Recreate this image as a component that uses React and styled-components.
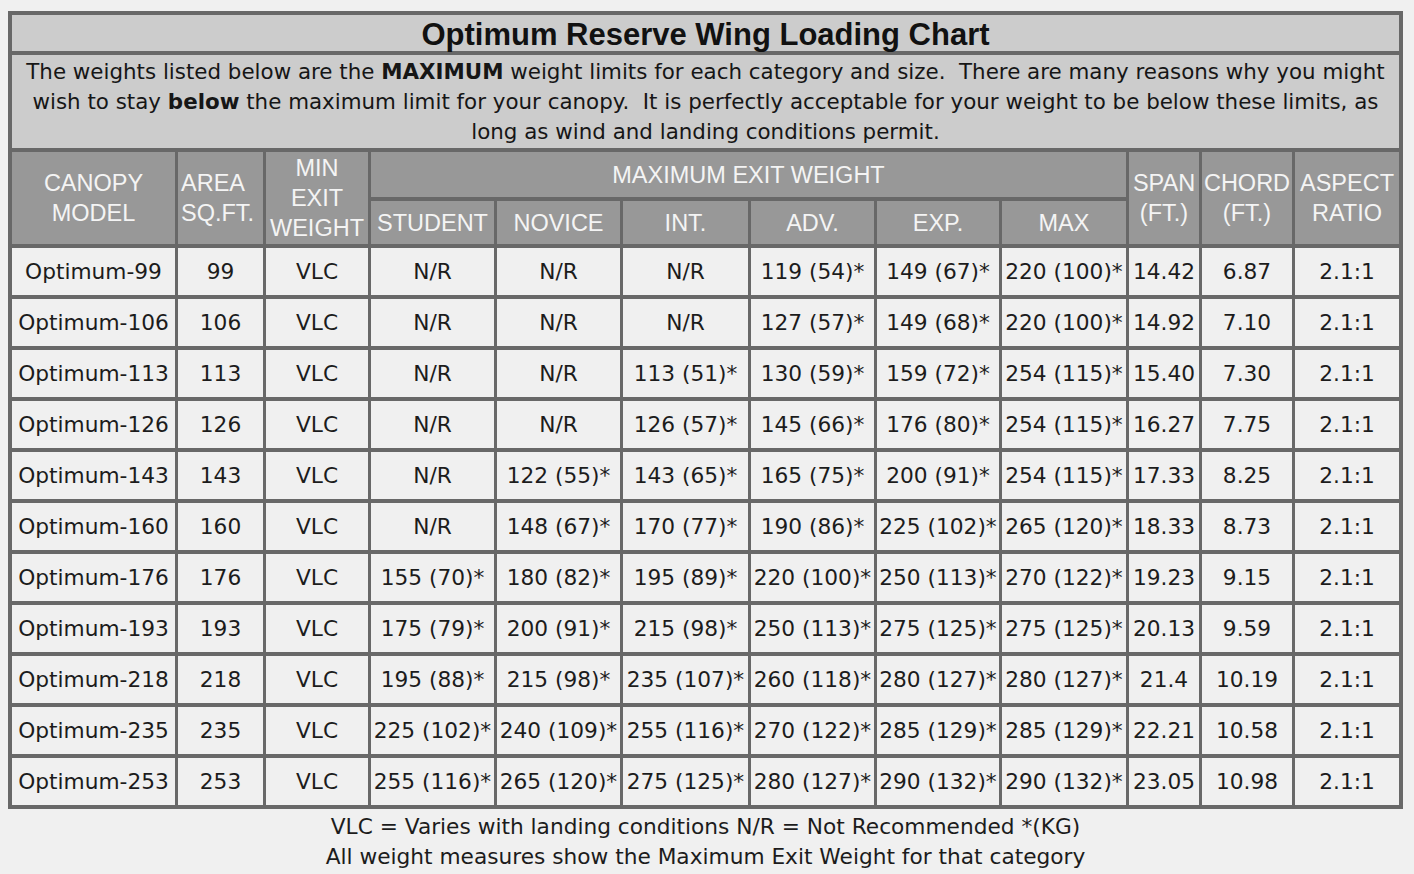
import React from "react";
import styled, { createGlobalStyle } from "styled-components";

const GlobalStyle = createGlobalStyle`
  html, body { background: #f0f0f0; }
  body { margin: 8px; font-family: "DejaVu Sans", Verdana, sans-serif; color: #1c1c1c; }
`;

const Page = styled.div`
  width: 1395px;
  padding-top: 3px;
`;

const Chart = styled.table`
  width: 1395px;
  table-layout: fixed;
  border-collapse: separate;
  border-spacing: 3px 4px;
  border-style: solid;
  border-color: #686868;
  border-width: 0 1px;
  background: #686868;
`;

const TitleCell = styled.td`
  height: 36px;
  padding: 3px 0 0;
  box-sizing: border-box;
  background: #cccccc;
  text-align: center;
  vertical-align: middle;
  font-family: "Liberation Sans", Arial, sans-serif;
  font-weight: bold;
  font-size: 31px;
  line-height: 33px;
  color: #111;
`;

const NoteCell = styled.td`
  height: 93px;
  padding: 0;
  background: #cccccc;
  text-align: center;
  vertical-align: middle;
  font-size: 21.4px;
  line-height: 30px;
  color: #161616;
`;

const NoteLine = styled.span`
  display: block;
  white-space: nowrap;
`;

const HeadCell = styled.td`
  height: ${(p) => p.$h || 43}px;
  padding: 0 0 0 ${(p) => (p.$align === "left" ? "3px" : "0")};
  background: #989898;
  color: #f4f4f4;
  text-align: ${(p) => p.$align || "center"};
  vertical-align: middle;
  font-family: "Liberation Sans", Arial, sans-serif;
  font-size: 23.5px;
  line-height: 30px;
  white-space: nowrap;
`;

const DataCell = styled.td`
  height: 47px;
  padding: 0;
  background: #f0f0f0;
  text-align: center;
  vertical-align: middle;
  font-size: 21.7px;
  white-space: nowrap;
  color: #1c1c1c;
`;

const Legend = styled.div`
  text-align: center;
  font-size: 21.7px;
  line-height: 30px;
  padding-top: 3px;
  color: #1c1c1c;
`;

const widths = [163, 85, 102, 123, 123, 125, 123, 122, 124, 70, 90, 104];

const rows = [
  ["Optimum-99", "99", "VLC", "N/R", "N/R", "N/R", "119 (54)*", "149 (67)*", "220 (100)*", "14.42", "6.87", "2.1:1"],
  ["Optimum-106", "106", "VLC", "N/R", "N/R", "N/R", "127 (57)*", "149 (68)*", "220 (100)*", "14.92", "7.10", "2.1:1"],
  ["Optimum-113", "113", "VLC", "N/R", "N/R", "113 (51)*", "130 (59)*", "159 (72)*", "254 (115)*", "15.40", "7.30", "2.1:1"],
  ["Optimum-126", "126", "VLC", "N/R", "N/R", "126 (57)*", "145 (66)*", "176 (80)*", "254 (115)*", "16.27", "7.75", "2.1:1"],
  ["Optimum-143", "143", "VLC", "N/R", "122 (55)*", "143 (65)*", "165 (75)*", "200 (91)*", "254 (115)*", "17.33", "8.25", "2.1:1"],
  ["Optimum-160", "160", "VLC", "N/R", "148 (67)*", "170 (77)*", "190 (86)*", "225 (102)*", "265 (120)*", "18.33", "8.73", "2.1:1"],
  ["Optimum-176", "176", "VLC", "155 (70)*", "180 (82)*", "195 (89)*", "220 (100)*", "250 (113)*", "270 (122)*", "19.23", "9.15", "2.1:1"],
  ["Optimum-193", "193", "VLC", "175 (79)*", "200 (91)*", "215 (98)*", "250 (113)*", "275 (125)*", "275 (125)*", "20.13", "9.59", "2.1:1"],
  ["Optimum-218", "218", "VLC", "195 (88)*", "215 (98)*", "235 (107)*", "260 (118)*", "280 (127)*", "280 (127)*", "21.4", "10.19", "2.1:1"],
  ["Optimum-235", "235", "VLC", "225 (102)*", "240 (109)*", "255 (116)*", "270 (122)*", "285 (129)*", "285 (129)*", "22.21", "10.58", "2.1:1"],
  ["Optimum-253", "253", "VLC", "255 (116)*", "265 (120)*", "275 (125)*", "280 (127)*", "290 (132)*", "290 (132)*", "23.05", "10.98", "2.1:1"],
];

const subHeads = ["STUDENT", "NOVICE", "INT.", "ADV.", "EXP.", "MAX"];

export default function App() {
  return (
    <Page>
      <GlobalStyle />
      <Chart>
        <colgroup>
          {widths.map((w, i) => (
            <col key={i} style={{ width: w }} />
          ))}
        </colgroup>
        <tbody>
          <tr>
            <TitleCell colSpan={12}>Optimum Reserve Wing Loading Chart</TitleCell>
          </tr>
          <tr>
            <NoteCell colSpan={12}>
              <NoteLine>
                The weights listed below are the <b>MAXIMUM</b> weight limits for each category and size.{"\u00a0 "}There are many reasons why you might
              </NoteLine>
              <NoteLine>
                wish to stay <b>below</b> the maximum limit for your canopy.{"\u00a0 "}It is perfectly acceptable for your weight to be below these limits, as
              </NoteLine>
              <NoteLine>long as wind and landing conditions permit.</NoteLine>
            </NoteCell>
          </tr>
          <tr>
            <HeadCell rowSpan={2}>
              CANOPY
              <br />
              MODEL
            </HeadCell>
            <HeadCell rowSpan={2} $align="left">
              AREA
              <br />
              SQ.FT.
            </HeadCell>
            <HeadCell rowSpan={2}>
              MIN
              <br />
              EXIT
              <br />
              WEIGHT
            </HeadCell>
            <HeadCell colSpan={6} $h={45}>
              MAXIMUM EXIT WEIGHT
            </HeadCell>
            <HeadCell rowSpan={2}>
              SPAN
              <br />
              (FT.)
            </HeadCell>
            <HeadCell rowSpan={2}>
              CHORD
              <br />
              (FT.)
            </HeadCell>
            <HeadCell rowSpan={2}>
              ASPECT
              <br />
              RATIO
            </HeadCell>
          </tr>
          <tr>
            {subHeads.map((h) => (
              <HeadCell key={h}>{h}</HeadCell>
            ))}
          </tr>
          {rows.map((r) => (
            <tr key={r[0]}>
              {r.map((v, i) => (
                <DataCell key={i}>{v}</DataCell>
              ))}
            </tr>
          ))}
        </tbody>
      </Chart>
      <Legend>
        VLC = Varies with landing conditions N/R = Not Recommended *(KG)
        <br />
        All weight measures show the Maximum Exit Weight for that category
      </Legend>
    </Page>
  );
}
